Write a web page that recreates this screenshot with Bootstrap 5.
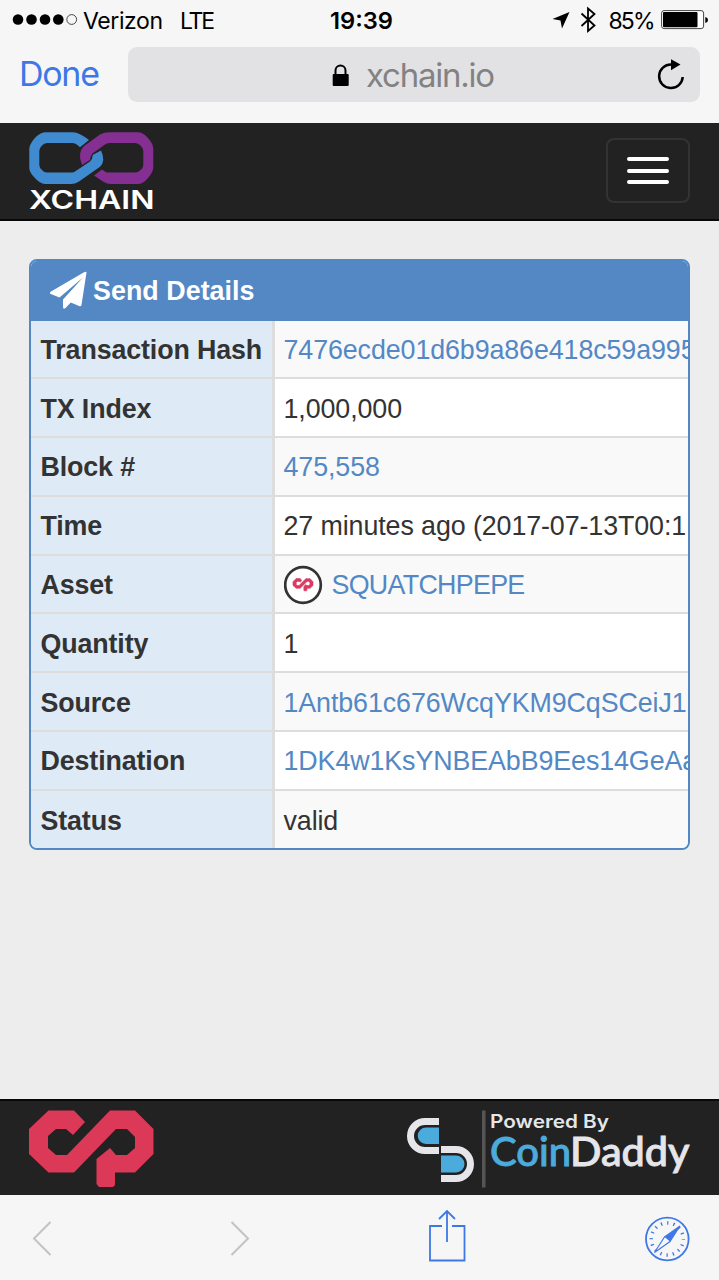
<!DOCTYPE html>
<html lang="en">
<head>
<meta charset="utf-8">
<meta name="viewport" content="width=device-width, initial-scale=1">
<title>XChain - Send Details</title>
<link href="https://cdn.jsdelivr.net/npm/bootstrap@5.3.0/dist/css/bootstrap.min.css" rel="stylesheet">
<style>
  html, body { height: 100%; }
  body { background: #ededed; font-family: "Liberation Sans", Arial, sans-serif; color: #333; overflow: hidden; }
  svg { display: block; flex: none; }
  .browser-top { height: 123px; background: #f6f6f6; font-family: Inter, sans-serif; color: #000; }
  .status-bar { height: 40px; }
  .address-row { height: 55px; margin-top: 7px; padding-right: 19px; }
  .done-link { width: 128px; padding-left: 20px; }
  .address-field { background: #e2e2e4; border-radius: 9px; }
  .site-nav { height: 98px; background: #222; border-bottom: 2px solid #080808; padding: 0 29px; }
  .menu-button { width: 84px; height: 65px; margin-top: 15px; border: 2px solid #333; border-radius: 8px; padding: 0; gap: 7.5px; box-shadow: none; }
  .menu-button span { display: block; width: 42px; height: 4px; border-radius: 2px; background: #fff; }
  .send-panel { width: 661px; height: 591px; margin: 38px 0 0 29px; border: 2px solid #5388c5; border-radius: 8px; background: #fff; overflow: hidden; }
  .panel-title { height: 59.5px; background: #5388c5; color: #fff; padding-left: 19px; }
  .details { font-size: 26.84px; line-height: 38px; margin: 0; white-space: nowrap; color: #333; }
  .details tr { height: 58.8px; border-bottom: 2px solid #ddd; }
  .details tr:last-child { border-bottom: 0; }
  .details th { width: 243.5px; flex: none; background: #deebf7; border-right: 3px solid #ddd; padding: 2px 0 0 9.5px; letter-spacing: -.13px; }
  .details td { flex: 1 1 0; min-width: 0; padding: 2px 0 0 9px; overflow: hidden; letter-spacing: -.1px; }
  .details tr:nth-child(odd) td { background: #f9f9f9; }
  .details a { color: #5388c5; text-decoration: none; }
  .details .asset-name { letter-spacing: -.7px; }
  .site-footer { height: 96px; background: #222; border-top: 2px solid #080808; padding: 0 29px; }
  .browser-tools { height: 85px; background: #f6f6f6; padding: 0 29px; }
</style>
</head>
<body class="d-flex flex-column">

<header class="browser-top flex-shrink-0">
  <div class="status-bar">
    <svg width="719" height="40" font-family="Inter, sans-serif" font-size="23">
      <g><circle cx="18" cy="19.5" r="5.3"/><circle cx="31.5" cy="19.5" r="5.3"/><circle cx="45" cy="19.5" r="5.3"/><circle cx="58.3" cy="19.5" r="5.3"/><circle cx="71.7" cy="19.5" r="4.9" fill="none" stroke="#333" stroke-width=".9"/></g>
      <text x="83" y="28.500" textLength="80">Verizon</text>
      <text x="180" y="28.500" textLength="35">LTE</text>
      <text x="330" y="28.500" font-weight="600" textLength="63" lengthAdjust="spacingAndGlyphs">19:39</text>
      <path d="M569.5 12 562 28.5 560.5 20.5 552.5 19Z"/>
      <path d="M581.5 13.5 594.5 25.5 588 31V8.500L594.5 14 581.5 26" fill="none" stroke="#000" stroke-width="1.8"/>
      <text x="608.500" y="28.500" textLength="47">85%</text>
      <rect x="661.6" y="10.600" width="42" height="18" rx="2.500" fill="#fff" stroke="#444" stroke-width="1"/>
      <rect x="663" y="12" width="34.500" height="15.300" rx="1"/>
      <path d="M705.300 17q2.700.5 2.700 3t-2.700 3Z"/>
    </svg>
  </div>
  <div class="address-row d-flex">
    <div class="done-link">
      <svg width="100" height="55"><text x="-1" y="39" font-size="34" fill="#3d78e6" textLength="81">Done</text></svg>
    </div>
    <div class="address-field flex-grow-1">
      <svg width="572" height="55">
        <path d="M207.500 28v-4.500a5 5 0 0 1 10 0V28" fill="none" stroke="#000" stroke-width="2"/>
        <rect x="204.700" y="27" width="16" height="12" rx="1"/>
        <text x="238" y="39.500" font-size="33" fill="#828284" textLength="129">xchain.io</text>
        <path d="M543.300 17.500A11.800 11.800 0 1 0 554.700 30" fill="none" stroke="#000" stroke-width="2.500"/>
        <path d="M543 12.300v11l9.500-5.800Z"/>
      </svg>
    </div>
  </div>
</header>

<nav class="site-nav d-flex justify-content-between flex-shrink-0">
  <a href="#" aria-label="XCHAIN">
    <svg width="126" height="94">
      <path d="M16 9.300H44Q50 9.500 60 17L51 24.300Q47 20 43 20H18Q15 20 13 22.500 10.300 25 10.300 28V42Q10.300 45 13 47 15 49.500 18 49.500H43Q44.500 49.500 46 48.500L61 38.500Q63.700 36 63.700 32L72 27.500Q77 38 71 43.700L50 58.500Q46 61 42 61H16Q11 61 5 54 .3 49 .3 45V26Q.3 22 5 16 11 9.300 16 9.300Z" fill="#408bd0"/>
      <path d="M80 9.300H109Q114 9.300 119 15 124.300 21 124.300 26V44Q124.300 49 119 55 114 61 109 61H82Q78 61 74 58.500L65 52.500 73 46.500 77.500 49.500H106Q109 49.500 111.500 47 114.300 45 114.300 42V28Q114.300 25 111.500 22.500 109 20 106 20H80Q78 20 76 21.500L63.500 30.500Q61 33 61 37L53 42Q48 30 55 23L71 11.500Q75 9.300 80 9.300Z" fill="#842f91"/>
      <text x="0" y="86" fill="#fff" font-family="Inter, sans-serif" font-weight="600" font-size="25.500" textLength="125.500" lengthAdjust="spacingAndGlyphs">XCHAIN</text>
    </svg>
  </a>
  <button class="menu-button navbar-toggler d-flex flex-column align-items-center justify-content-center" type="button" aria-label="Menu"><span></span><span></span><span></span></button>
</nav>

<main class="flex-grow-1">
  <section class="send-panel">
    <div class="panel-title">
      <svg width="230" height="59" font-family="Liberation Sans, Arial, sans-serif">
        <path transform="translate(0 1)" d="M36.500 10.500 31.500 43Q31 45 29 44L20.800 40.500 15.500 46Q13 48 13 44.500V37.500L33 15.500 9.500 35.500.8 32Q-1 31 1 29.500L34 10.200Q36.500 9 36.500 10.500Z" fill="#fff"/>
        <text x="43" y="38.500" fill="#fff" font-weight="700" font-size="26.840" textLength="161.500">Send Details</text>
      </svg>
    </div>
    <table class="details d-block">
      <tbody class="d-block">
        <tr class="d-flex"><th class="d-flex align-items-center">Transaction Hash</th><td class="d-flex align-items-center"><a href="#">7476ecde01d6b9a86e418c59a995</a></td></tr>
        <tr class="d-flex"><th class="d-flex align-items-center">TX Index</th><td class="d-flex align-items-center">1,000,000</td></tr>
        <tr class="d-flex"><th class="d-flex align-items-center">Block #</th><td class="d-flex align-items-center"><a href="#">475,558</a></td></tr>
        <tr class="d-flex"><th class="d-flex align-items-center">Time</th><td class="d-flex align-items-center">27 minutes ago (2017-07-13T00:1</td></tr>
        <tr class="d-flex"><th class="d-flex align-items-center">Asset</th><td class="d-flex align-items-center">
          <svg class="me-2" width="40" height="40" viewBox="0 0 40 40"><circle cx="19" cy="20" r="17.800" fill="#fff" stroke="#333" stroke-width="2.700"/><path transform="translate(9 13.500) scale(.16)" d="M54.500 13 44 23 39.500 18H27L20 25V37L27 44H38L80 1H107L125 20V43L107 61H87V75L84 77H70L68 74V49L81 38 87 44H98L106 37V25L98 18H88L45 61H20L0 43V20L20 0H45Z" fill="#dc3a62" stroke="#dc3a62" stroke-width="4"/></svg>
          <a class="asset-name" href="#">SQUATCHPEPE</a></td></tr>
        <tr class="d-flex"><th class="d-flex align-items-center">Quantity</th><td class="d-flex align-items-center">1</td></tr>
        <tr class="d-flex"><th class="d-flex align-items-center">Source</th><td class="d-flex align-items-center"><a href="#">1Antb61c676WcqYKM9CqSCeiJ1</a></td></tr>
        <tr class="d-flex"><th class="d-flex align-items-center">Destination</th><td class="d-flex align-items-center"><a href="#">1DK4w1KsYNBEAbB9Ees14GeAa</a></td></tr>
        <tr class="d-flex"><th class="d-flex align-items-center">Status</th><td class="d-flex align-items-center">valid</td></tr>
      </tbody>
    </table>
  </section>
</main>

<footer class="site-footer d-flex justify-content-between flex-shrink-0">
  <svg width="126" height="92">
    <path d="M19.500 9.500H45L56 21 44 34 37 28H27L19 35V47L27 54H38L81 9.500H106L124.500 28V53L106 71.500H86V84L84 86H70L67.500 83V58L81 47 87 54H98L106 47V36L98 28H87L45 71.500H19.500L0 53V28Z" fill="#dc3857"/>
  </svg>
  <svg width="284" height="92">
    <g fill="#e6e6ea">
      <path d="M33 17H19A18 18 0 0 0 19 53H33V46H19A11 11 0 0 1 19 24H33Z"/>
      <path d="M35 45H50A18 18 0 0 1 50 81H35V74H50A11 11 0 0 0 50 52H35Z"/>
      <path d="M33 26.500H20A8 8 0 0 0 20 43H33Z" fill="#4babdc"/>
      <path d="M35 54.500H50A8 8 0 0 1 50 71.500H35Z" fill="#4babdc"/>
      <rect x="76" y="9.500" width="3.500" height="77" fill="#555"/>
      <text x="84" y="27" font-family="Inter, sans-serif" font-size="18" font-weight="600" textLength="119" lengthAdjust="spacingAndGlyphs">Powered By</text>
      <text x="84" y="65" font-family="Lato, sans-serif" font-size="40" font-weight="500" fill="#4babdc" stroke="#4babdc" stroke-width=".9" textLength="81" lengthAdjust="spacingAndGlyphs">Coin</text>
      <text x="164" y="65" font-family="Lato, sans-serif" font-size="40" font-weight="500" stroke="#e6e6ea" stroke-width=".9" textLength="119.500" lengthAdjust="spacingAndGlyphs">Daddy</text>
    </g>
  </svg>
</footer>

<div class="browser-tools flex-shrink-0 d-flex">
  <svg width="661" height="85" fill="none">
    <g stroke="#c2c2c5" stroke-width="2"><path d="M21.500 27 5 43.500 21.500 60"/><path d="M202.500 27 219 43.500 202.500 60"/></g>
    <g stroke="#3d78e6" stroke-width="1.800">
      <path d="M413 31H401V65.500H435.500V31H423"/><path d="M418 47V16.500M410 24 418 16 426 24"/>
      <circle cx="638.300" cy="44" r="21.300"/>
      <circle cx="638.300" cy="44" r="16" stroke-width="3.500" stroke-dasharray="1.300 4.983" stroke-dashoffset=".65"/>
      <path d="M651 31 641 46.500 625.500 57.500 635.500 42Z" fill="#f6f6f6" stroke-width="1.100"/>
      <path d="M651 31 641 46.500 635.500 42Z" fill="#3d78e6" stroke="none"/>
    </g>
  </svg>
</div>
<script src="https://cdn.jsdelivr.net/npm/bootstrap@5.3.0/dist/js/bootstrap.bundle.min.js"></script>
</body>
</html>
